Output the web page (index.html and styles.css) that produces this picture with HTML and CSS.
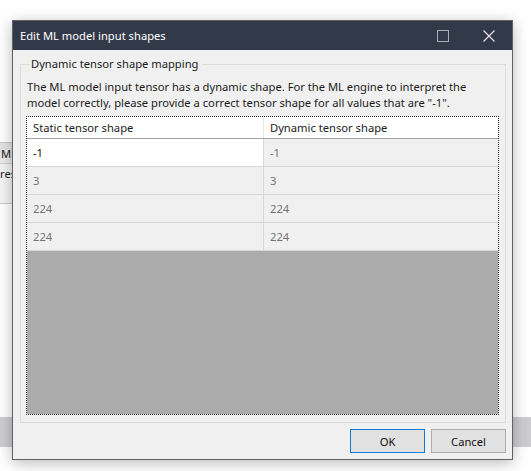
FILE: index.html
```html
<!DOCTYPE html>
<html>
<head>
<meta charset="utf-8">
<link rel="stylesheet" href="styles.css">
</head>
<body>
<div class="desk">
  <div class="strip"></div>
  <div class="side">
    <div class="side-top">ML</div>
    <div class="side-bottom">res</div>
  </div>
  <div class="dialog">
    <div class="titlebar">
      <span class="title">Edit ML model input shapes</span>
      <span class="tb-btn">
        <svg width="12" height="12" viewBox="0 0 12 12"><rect x="0.5" y="0.5" width="11" height="11" fill="none" stroke="#a9adb5" stroke-width="1"/></svg>
      </span>
      <span class="tb-btn close">
        <svg width="12" height="12" viewBox="0 0 12 12"><path d="M0.5 0.5 L11.5 11.5 M11.5 0.5 L0.5 11.5" stroke="#e6e7ea" stroke-width="1.1" fill="none"/></svg>
      </span>
    </div>
    <div class="body">
      <div class="group">
        <div class="legend"><span>Dynamic tensor shape mapping</span></div>
        <p class="desc">The ML model input tensor has a dynamic shape. For the ML engine to interpret the model correctly, please provide a correct tensor shape for all values that are "-1".</p>
        <div class="grid">
          <div class="row head">
            <div class="cell">Static tensor shape</div>
            <div class="cell">Dynamic tensor shape</div>
          </div>
          <div class="row">
            <div class="cell edit">-1</div>
            <div class="cell">-1</div>
          </div>
          <div class="row">
            <div class="cell">3</div>
            <div class="cell">3</div>
          </div>
          <div class="row">
            <div class="cell">224</div>
            <div class="cell">224</div>
          </div>
          <div class="row">
            <div class="cell">224</div>
            <div class="cell">224</div>
          </div>
          <div class="empty"></div>
        </div>
      </div>
      <div class="buttons">
        <button class="btn default">OK</button>
        <button class="btn">Cancel</button>
      </div>
    </div>
  </div>
</div>
</body>
</html>
```
FILE: styles.css
```css
* { box-sizing: border-box; }
html, body { margin: 0; padding: 0; }
body {
  width: 531px;
  height: 471px;
  background: #ffffff;
  font-family: "Noto Sans", "Open Sans", sans-serif;
  font-size: 11.2px;
  overflow: hidden;
}
.desk {
  position: relative;
  width: 531px;
  height: 471px;
}
.strip {
  position: absolute;
  left: 0;
  top: 417px;
  width: 531px;
  height: 30px;
  background: #cdcdd1;
}
.side {
  position: absolute;
  left: -30px;
  top: 142px;
  width: 50px;
  height: 62px;
  border: 1px solid #c9c9c9;
  border-radius: 0 0 4px 4px;
  background: #f4f4f4;
  display: flex;
  flex-direction: column;
  color: #222;
}
.side-top {
  height: 21px;
  padding-left: 30px;
  line-height: 21px;
  background: linear-gradient(#e2e2e2, #ececec);
  border-bottom: 1px solid #d0d0d0;
}
.side-bottom {
  padding-left: 29px;
  line-height: 20px;
}
.dialog {
  position: absolute;
  left: 12px;
  top: 20px;
  width: 501px;
  height: 440px;
  border: 1px solid #5f6166;
  background: #f0f0f0;
  box-shadow: 0 3px 14px rgba(0, 0, 0, 0.28);
  display: flex;
  flex-direction: column;
}
.titlebar {
  height: 29px;
  background: #323a49;
  color: #ffffff;
  display: flex;
  align-items: center;
  padding-left: 7px;
  flex: none;
}
.title {
  flex: 1;
  line-height: 16px;
}
.tb-btn {
  width: 46px;
  height: 29px;
  display: flex;
  align-items: center;
  justify-content: center;
}
.tb-btn svg { display: block; }
.body {
  flex: 1;
  display: flex;
  flex-direction: column;
  padding: 14px 6px 6px 7px;
}
.group {
  height: 359px;
  border: 1px solid #dcdcdc;
  padding: 0 6px 7px 5px;
  display: flex;
  flex-direction: column;
}
.legend {
  margin-top: -9px;
  height: 16px;
  line-height: 16px;
  padding-left: 4px;
  color: #1b1b1b;
}
.legend span {
  background: #f0f0f0;
  padding: 0 4px 0 1px;
}
.desc {
  margin: 7px 0 5px 1px;
  line-height: 16px;
  color: #1b1b1b;
}
.grid {
  flex: 1;
  border: 1px dotted #333333;
  display: flex;
  flex-direction: column;
  background: #f0f0f0;
}
.row {
  display: grid;
  grid-template-columns: 237px 1fr;
  height: 28px;
  border-bottom: 1px solid #d7d7d7;
  flex: none;
}
.row.head {
  height: 22px;
  background: #ffffff;
  border-bottom: 1px solid #a3a3a3;
}
.cell {
  padding-left: 6px;
  display: flex;
  align-items: center;
  color: #737373;
  border-right: 1px solid #d7d7d7;
}
.cell:last-child { border-right: none; }
.head .cell {
  color: #1b1b1b;
  border-right-color: #e6e6e6;
}
.cell.edit {
  background: #ffffff;
  color: #111111;
}
.empty {
  flex: 1;
  background: #ababab;
}
.buttons {
  display: flex;
  justify-content: flex-end;
  gap: 6px;
  margin-top: 6px;
}
.btn {
  width: 75px;
  height: 24px;
  font-family: "Noto Sans", "Open Sans", sans-serif;
  font-size: 11.2px;
  color: #111;
  background: #e1e1e1;
  border: 1px solid #adadad;
  padding: 0;
  margin: 0;
}
.btn.default {
  border-color: #0a7bd8;
}
```
